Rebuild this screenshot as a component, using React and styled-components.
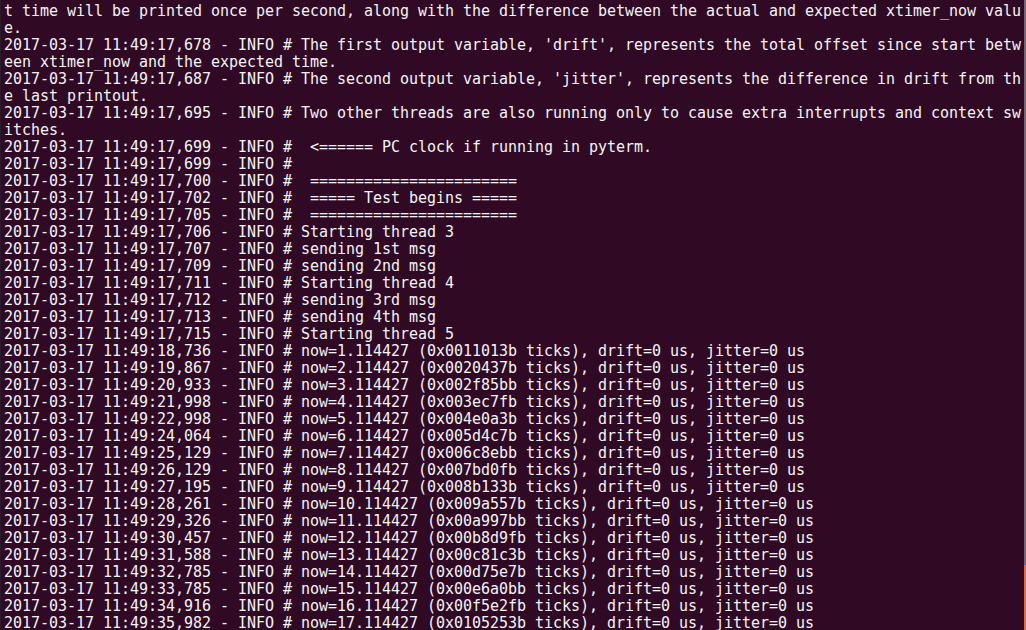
import React from "react";
import styled, { createGlobalStyle } from "styled-components";

const Global = createGlobalStyle`
  html, body { margin: 0; padding: 0; background: #300a24; }
  body { overflow: hidden; }
`;

const Window = styled.div`
  width: 1026px;
  height: 630px;
  display: flex;
  flex-direction: row;
  background: #300a24;
  overflow: hidden;
  box-sizing: border-box;
  border-left: 1px solid #2a1a2c;
`;

const Screen = styled.div`
  flex: 1;
  min-width: 0;
  padding: 3px 0 0 3px;
  display: flex;
  flex-direction: column;
  overflow: hidden;
`;

const Line = styled.div`
  font-family: "DejaVu Sans Mono", "Liberation Mono", monospace;
  font-size: 15px;
  letter-spacing: -0.03px;
  line-height: 17px;
  height: 17px;
  color: #f4f4f4;
  white-space: pre;
`;

const Scrollbar = styled.div`
  width: 2px;
  flex: none;
  display: flex;
  flex-direction: column;
`;

const Track = styled.div`
  flex: 1;
  background: #776676;
`;

const Thumb = styled.div`
  height: 65px;
  background: #e06b3c;
`;

const P = (t) => `2017-03-17 11:49:${t} - INFO # `;

const lines = [
  "t time will be printed once per second, along with the difference between the actual and expected xtimer_now valu",
  "e.",
  P("17,678") + "The first output variable, 'drift', represents the total offset since start betw",
  "een xtimer_now and the expected time.",
  P("17,687") + "The second output variable, 'jitter', represents the difference in drift from th",
  "e last printout.",
  P("17,695") + "Two other threads are also running only to cause extra interrupts and context sw",
  "itches.",
  P("17,699") + " <====== PC clock if running in pyterm.",
  P("17,699"),
  P("17,700") + " =======================",
  P("17,702") + " ===== Test begins =====",
  P("17,705") + " =======================",
  P("17,706") + "Starting thread 3",
  P("17,707") + "sending 1st msg",
  P("17,709") + "sending 2nd msg",
  P("17,711") + "Starting thread 4",
  P("17,712") + "sending 3rd msg",
  P("17,713") + "sending 4th msg",
  P("17,715") + "Starting thread 5",
];

const ticks = [
  ["18,736", "0x0011013b"],
  ["19,867", "0x0020437b"],
  ["20,933", "0x002f85bb"],
  ["21,998", "0x003ec7fb"],
  ["22,998", "0x004e0a3b"],
  ["24,064", "0x005d4c7b"],
  ["25,129", "0x006c8ebb"],
  ["26,129", "0x007bd0fb"],
  ["27,195", "0x008b133b"],
  ["28,261", "0x009a557b"],
  ["29,326", "0x00a997bb"],
  ["30,457", "0x00b8d9fb"],
  ["31,588", "0x00c81c3b"],
  ["32,785", "0x00d75e7b"],
  ["33,785", "0x00e6a0bb"],
  ["34,916", "0x00f5e2fb"],
  ["35,982", "0x0105253b"],
];

ticks.forEach(([t, hex], i) => {
  lines.push(
    P(t) + `now=${i + 1}.114427 (${hex} ticks), drift=0 us, jitter=0 us`
  );
});

export default function App() {
  return (
    <>
      <Global />
      <Window>
        <Screen>
          {lines.map((l, i) => (
            <Line key={i}>{l}</Line>
          ))}
        </Screen>
        <Scrollbar>
          <Track />
          <Thumb />
        </Scrollbar>
      </Window>
    </>
  );
}
